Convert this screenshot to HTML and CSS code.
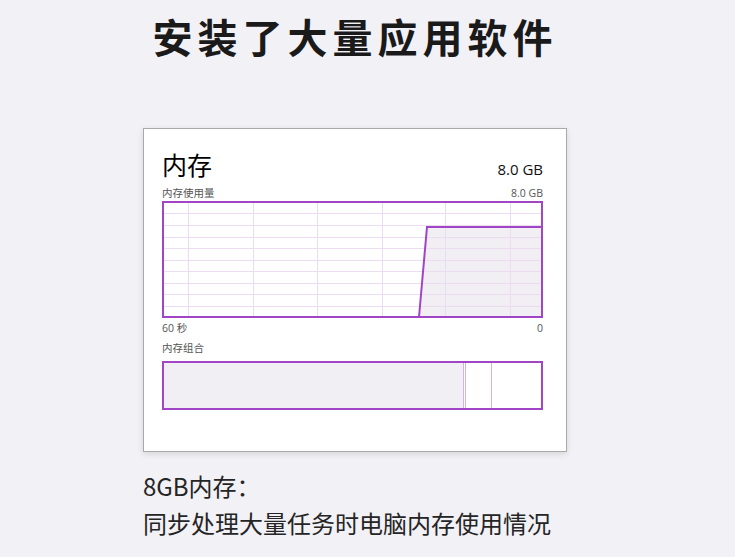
FILE: index.html
```html
<!DOCTYPE html>
<html lang="zh-CN">
<head>
  <meta charset="UTF-8">
  <meta name="viewport" content="width=device-width, initial-scale=1.0">
  <title>安装了大量应用软件</title>
  <link rel="stylesheet" href="styles.css">
</head>
<body>

  <div class="page">
    <h1 class="title">安装了大量应用软件</h1>

    <div class="card">
      <div class="card-head">
        <span class="card-title">内存</span>
        <span class="card-total">8.0 GB</span>
      </div>

      <div class="row-label">
        <span>内存使用量</span>
        <span class="latin">8.0 GB</span>
      </div>

      <svg class="chart" width="381" height="117" viewBox="0 0 381 117">
        <!-- 已用内存区域 -->
        <polygon points="257,116 265,26 380,26 380,116" fill="#f1eff3"/>
        <g stroke="#ecdcf2" stroke-width="1">
          <line x1="26.5" y1="2" x2="26.5" y2="116"/>
          <line x1="91.5" y1="2" x2="91.5" y2="116"/>
          <line x1="155.5" y1="2" x2="155.5" y2="116"/>
          <line x1="220.5" y1="2" x2="220.5" y2="116"/>
          <line x1="283.5" y1="2" x2="283.5" y2="116"/>
          <line x1="348.5" y1="2" x2="348.5" y2="116"/>
          <line x1="2" y1="12.5" x2="380" y2="12.5"/>
          <line x1="2" y1="24.5" x2="380" y2="24.5"/>
          <line x1="2" y1="36.5" x2="380" y2="36.5"/>
          <line x1="2" y1="47.5" x2="380" y2="47.5"/>
          <line x1="2" y1="59.5" x2="380" y2="59.5"/>
          <line x1="2" y1="70.5" x2="380" y2="70.5"/>
          <line x1="2" y1="82.5" x2="380" y2="82.5"/>
          <line x1="2" y1="93.5" x2="380" y2="93.5"/>
          <line x1="2" y1="105.5" x2="380" y2="105.5"/>
        </g>
        <polyline points="257,116 265,26 380,26" fill="none" stroke="#a045c6" stroke-width="2"/>
        <rect x="1" y="1" width="379" height="115" fill="none" stroke="#a045c6" stroke-width="2"/>
      </svg>

      <div class="row-label axis">
        <span class="latin">60 秒</span>
        <span class="latin">0</span>
      </div>

      <div class="row-label">
        <span>内存组合</span>
      </div>

      <svg class="bar" width="381" height="49" viewBox="0 0 381 49">
        <rect x="2" y="2" width="299" height="45" fill="#f1eff3"/>
        <g stroke="#d2b4dc" stroke-width="1">
          <line x1="301.5" y1="2" x2="301.5" y2="47"/>
          <line x1="303.5" y1="2" x2="303.5" y2="47"/>
          <line x1="329.5" y1="2" x2="329.5" y2="47"/>
        </g>
        <rect x="1" y="1" width="379" height="47" fill="none" stroke="#a045c6" stroke-width="2"/>
      </svg>
    </div>

    <p class="caption">8GB内存：</p>
    <p class="caption">同步处理大量任务时电脑内存使用情况</p>
  </div>

</body>
</html>
```

FILE: styles.css
```css
body {
  margin: 0;
  background-color: #f2f1f6;
  font-family: "Noto Sans CJK SC", "Noto Sans", sans-serif;
  color: #222;
}

.page {
  width: 424px;
  margin-left: 143px;
  padding-top: 12px;
}

.title {
  margin: 0;
  font-size: 40px;
  font-weight: bold;
  letter-spacing: 5px;
  line-height: 48px;
  text-align: center;
  white-space: nowrap;
  color: #1a1a1a;
}

.card {
  margin-top: 68px;
  height: 324px;
  box-sizing: border-box;
  background-color: #fff;
  border: 1px solid #a9a9a9;
  box-shadow: 0 2px 6px rgba(0, 0, 0, 0.12);
  padding: 18px 23px 0 18px;
}

.card-head {
  display: flex;
  justify-content: space-between;
  align-items: baseline;
  height: 38px;
}

.card-title {
  font-size: 25px;
  line-height: 34px;
  color: #000;
}

.card-total {
  font-family: "Open Sans", "Noto Sans", sans-serif;
  font-size: 15px;
  color: #111;
}

.row-label {
  display: flex;
  justify-content: space-between;
  font-size: 10.5px;
  line-height: 16px;
  color: #555;
}

.latin {
  font-family: "Open Sans", "Noto Sans CJK SC", sans-serif;
}

.chart {
  display: block;
}

.axis {
  margin-top: 2px;
  margin-bottom: 4px;
}

.bar {
  display: block;
  margin-top: 5px;
}

.caption {
  margin: 0;
  font-size: 24px;
  line-height: 37px;
  color: #252525;
}

.caption:first-of-type {
  margin-top: 15px;
}
```
